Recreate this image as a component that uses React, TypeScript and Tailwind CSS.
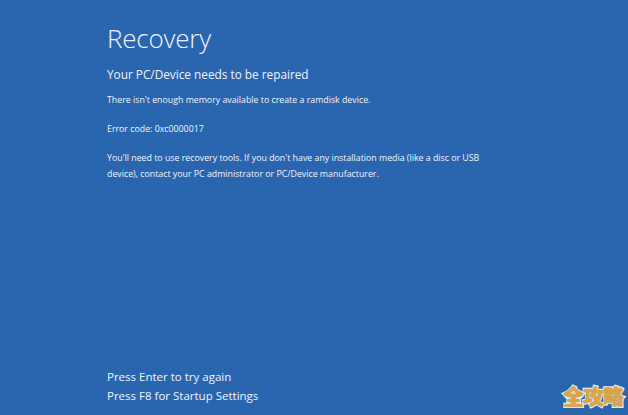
export default function App() {
    return (
        <div
            className="relative flex h-[415px] w-[628px] flex-col overflow-hidden bg-[#2a66b0] pl-[107px] text-[#eef3fa]"
            style={{ fontFamily: '"Open Sans", "Noto Sans", sans-serif' }}
        >
            {/* HEADER */}
            <h1 className="mt-[19px] text-[26px] font-light leading-[38px] tracking-[-0.2px]">
                Recovery
            </h1>

            <p className="mt-[8px] text-[11.8px] leading-[18px]">
                Your PC/Device needs to be repaired
            </p>

            {/* DETAILS */}
            <div className="mt-[9px] space-y-[13px] text-[8.8px] leading-[16px]">
                <p>There isn't enough memory available to create a ramdisk device.</p>
                <p>Error code: 0xc0000017</p>
                <p className="w-[404px]">
                    You'll need to use recovery tools. If you don't have any installation media (like a disc or USB
                    device), contact your PC administrator or PC/Device manufacturer.
                </p>
            </div>

            {/* FOOTER */}
            <div className="mt-auto mb-[10px] text-[11.5px] leading-[19px]">
                <p>Press Enter to try again</p>
                <p>Press F8 for Startup Settings</p>
            </div>

            {/* WATERMARK */}
            <div
                className="absolute right-[5px] bottom-[9px] text-[21px] font-black leading-none tracking-[-1px] text-[#dca646]"
                style={{
                    fontFamily: '"Noto Sans CJK SC", sans-serif',
                    WebkitTextStroke: "2.5px #ffffff",
                    paintOrder: "stroke fill",
                    textShadow: "0 0 2px rgba(60,40,10,0.6)",
                }}
            >
                全攻略
            </div>
        </div>
    );
}
